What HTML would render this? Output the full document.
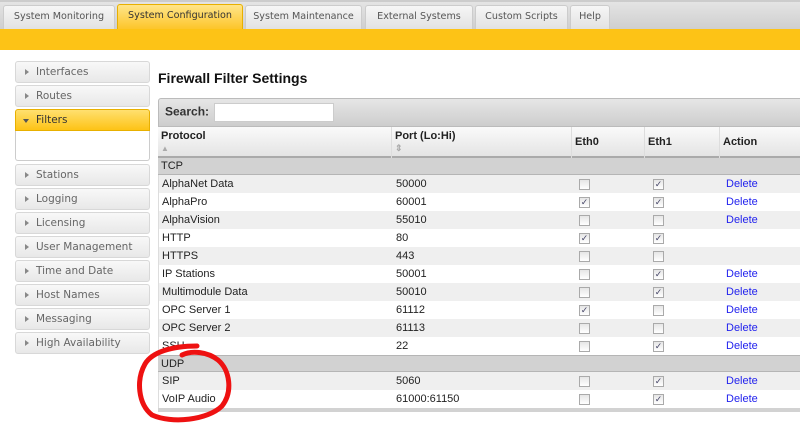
<!DOCTYPE html>
<html><head><style>
*{margin:0;padding:0;box-sizing:border-box}
body{width:800px;height:424px;overflow:hidden;background:#fff;font-family:"DejaVu Sans",Verdana,sans-serif;position:relative}
.strip{position:absolute;left:0;top:0;width:800px;height:29px;background:linear-gradient(#e4e4e4,#cfcfcf);border-top:2px solid #ccc}
.tab{position:absolute;top:5px;height:24px;background:linear-gradient(#f6f6f6,#e2e2e2);border:1px solid #ccc;border-bottom:none;border-radius:3px 3px 0 0;font-size:9.6px;color:#555;text-align:center;line-height:22px;white-space:nowrap}
.tab.act{background:linear-gradient(#ffe58a,#fdc52a);border-color:#e8b000;color:#333;top:4px;height:25px}
.bar{position:absolute;left:0;top:29px;width:800px;height:21px;background:#fdc316}
.side{position:absolute;left:15px;width:135px;height:22px;border:1px solid #d8d8d8;border-radius:3px;background:linear-gradient(#f8f8f8,#e8e8e8);font-size:10.5px;color:#666;line-height:20px;padding-left:20px}
.side:before{content:"";position:absolute;left:9px;top:7px;border-left:4px solid #888;border-top:3px solid transparent;border-bottom:3px solid transparent}
.side.act{background:linear-gradient(#ffe070,#fdc316);border-color:#e8b000;color:#333;border-radius:3px 3px 0 0}
.side.act:before{left:7px;top:9px;border-top:4px solid #555;border-left:3px solid transparent;border-right:3px solid transparent;border-bottom:none}
h1{position:absolute;left:158px;top:70px;font-family:"Liberation Sans",Arial,sans-serif;font-size:14px;font-weight:bold;color:#111}
.tbl{position:absolute;left:158px;top:98px;width:650px;font-family:"Liberation Sans",Arial,sans-serif;font-size:11px;color:#222}
.search{height:29px;background:linear-gradient(#e6e6e6,#cdcdcd);border:1px solid #bbb;border-radius:3px 0 0 0;padding:4px 6px;font-weight:bold;font-size:12px;color:#333}
.search span{display:inline-block;width:120px;height:19px;background:#fff;border:1px solid #ccc;vertical-align:middle;margin-left:2px}
.row{position:relative;height:18px;line-height:18px;border-left:1px solid #ddd}
.row div{position:absolute;top:0}
.c1{left:3px}.c2{left:237px}.c3{left:420px}.c4{left:494px}.c5{left:567px;color:#2222ee}
.hdr{height:31px;background:linear-gradient(#fafafa,#e4e4e4);border-bottom:2px solid #aaa;font-weight:bold;position:relative}
.hdr div{position:absolute;top:0;height:31px;border-right:1px solid #ddd;padding:3px}
.grp{background:#d2d2d2;border-bottom:1px solid #b5b5b5;height:17px;line-height:17px;padding-left:3px}
.g{background:#efefef}.w{background:#fff}
.row div.cb{position:absolute;width:11px;height:11px;border:1px solid #aaa;background:linear-gradient(#e6e6e6,#fff);top:4px;font-size:9px;line-height:9px;text-align:center;color:#446}
</style></head><body>
<div class="strip"></div>
<div class="tab" style="left:3px;width:112px">System Monitoring</div>
<div class="tab act" style="left:117px;width:126px">System Configuration</div>
<div class="tab" style="left:245px;width:117px">System Maintenance</div>
<div class="tab" style="left:365px;width:108px">External Systems</div>
<div class="tab" style="left:475px;width:93px">Custom Scripts</div>
<div class="tab" style="left:570px;width:40px">Help</div>
<div class="bar"></div>

<div class="side" style="top:61px">Interfaces</div>
<div class="side" style="top:85px">Routes</div>
<div class="side act" style="top:109px">Filters</div>
<div style="position:absolute;left:15px;top:131px;width:135px;height:30px;border:1px solid #ccc;border-top:none;border-radius:0 0 3px 3px"></div>
<div class="side" style="top:164px">Stations</div>
<div class="side" style="top:188px">Logging</div>
<div class="side" style="top:212px">Licensing</div>
<div class="side" style="top:236px">User Management</div>
<div class="side" style="top:260px">Time and Date</div>
<div class="side" style="top:284px">Host Names</div>
<div class="side" style="top:308px">Messaging</div>
<div class="side" style="top:332px">High Availability</div>

<h1>Firewall Filter Settings</h1>
<div class="tbl">
<div class="search">Search: <span></span></div>
<div class="hdr">
<div style="left:0;width:234px">Protocol<br><span style="color:#aaa;font-size:8px">▲</span></div>
<div style="left:234px;width:180px">Port (Lo:Hi)<br><span style="color:#aaa;font-size:9px">⇕</span></div>
<div style="left:414px;width:73px;padding-top:9px">Eth0</div>
<div style="left:487px;width:75px;padding-top:9px">Eth1</div>
<div style="left:562px;width:90px;padding-top:9px">Action</div>
</div>
<div class="grp">TCP</div>
<div class="row g"><div class="c1">AlphaNet Data</div><div class="c2">50000</div><div class="cb c3"></div><div class="cb c4">✓</div><div class="c5">Delete</div></div>
<div class="row w"><div class="c1">AlphaPro</div><div class="c2">60001</div><div class="cb c3">✓</div><div class="cb c4">✓</div><div class="c5">Delete</div></div>
<div class="row g"><div class="c1">AlphaVision</div><div class="c2">55010</div><div class="cb c3"></div><div class="cb c4"></div><div class="c5">Delete</div></div>
<div class="row w"><div class="c1">HTTP</div><div class="c2">80</div><div class="cb c3">✓</div><div class="cb c4">✓</div></div>
<div class="row g"><div class="c1">HTTPS</div><div class="c2">443</div><div class="cb c3"></div><div class="cb c4"></div></div>
<div class="row w"><div class="c1">IP Stations</div><div class="c2">50001</div><div class="cb c3"></div><div class="cb c4">✓</div><div class="c5">Delete</div></div>
<div class="row g"><div class="c1">Multimodule Data</div><div class="c2">50010</div><div class="cb c3"></div><div class="cb c4">✓</div><div class="c5">Delete</div></div>
<div class="row w"><div class="c1">OPC Server 1</div><div class="c2">61112</div><div class="cb c3">✓</div><div class="cb c4"></div><div class="c5">Delete</div></div>
<div class="row g"><div class="c1">OPC Server 2</div><div class="c2">61113</div><div class="cb c3"></div><div class="cb c4"></div><div class="c5">Delete</div></div>
<div class="row w"><div class="c1">SSH</div><div class="c2">22</div><div class="cb c3"></div><div class="cb c4">✓</div><div class="c5">Delete</div></div>
<div class="grp" style="border-top:1px solid #b5b5b5">UDP</div>
<div class="row g"><div class="c1">SIP</div><div class="c2">5060</div><div class="cb c3"></div><div class="cb c4">✓</div><div class="c5">Delete</div></div>
<div class="row w"><div class="c1">VoIP Audio</div><div class="c2">61000:61150</div><div class="cb c3"></div><div class="cb c4">✓</div><div class="c5">Delete</div></div>
<div style="height:4px;background:#d2d2d2"></div>
</div>
<svg style="position:absolute;left:0;top:0" width="800" height="424"><path d="M197 346 C172 346 152 352 145 364 C136 380 138 404 152 415 C172 424 208 420 222 406 C233 392 230 370 218 360 C208 352 192 350 182 355" fill="none" stroke="#ee1111" stroke-width="5" stroke-linecap="round"/></svg>
</body></html>
